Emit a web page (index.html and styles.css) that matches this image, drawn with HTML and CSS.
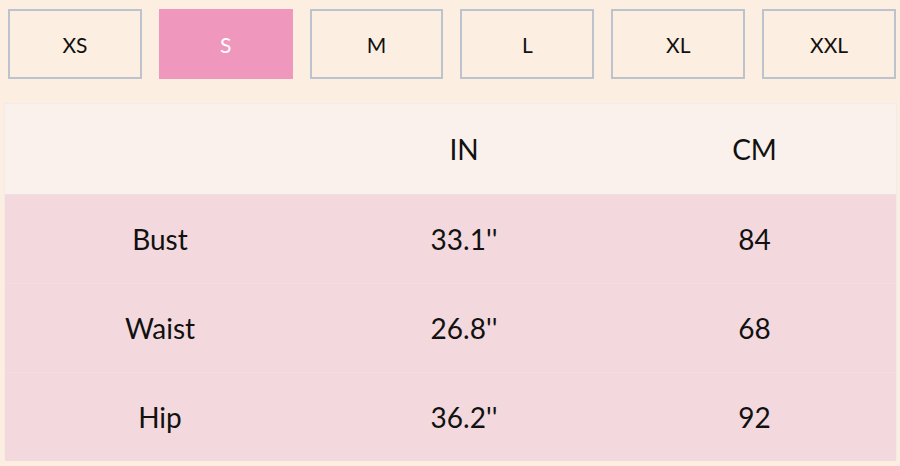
FILE: index.html
```html
<!DOCTYPE html>
<html>
<head>
<meta charset="utf-8">
<link rel="stylesheet" href="styles.css">
</head>
<body>
<div class="page">
  <div class="sizes">
    <div class="size">XS</div>
    <div class="size active">S</div>
    <div class="size">M</div>
    <div class="size">L</div>
    <div class="size">XL</div>
    <div class="size">XXL</div>
  </div>
  <div class="chart">
    <div class="row head">
      <div class="cell"></div>
      <div class="cell">IN</div>
      <div class="cell">CM</div>
    </div>
    <div class="row">
      <div class="cell">Bust</div>
      <div class="cell">33.1''</div>
      <div class="cell">84</div>
    </div>
    <div class="row">
      <div class="cell">Waist</div>
      <div class="cell">26.8''</div>
      <div class="cell">68</div>
    </div>
    <div class="row">
      <div class="cell">Hip</div>
      <div class="cell">36.2''</div>
      <div class="cell">92</div>
    </div>
  </div>
</div>
</body>
</html>
```
FILE: styles.css
```css
html, body {
  margin: 0;
  padding: 0;
  background: #fdeee2;
  font-family: "Lato", "Open Sans", sans-serif;
  color: #111;
}
.page {
  width: 900px;
  height: 466px;
  box-sizing: border-box;
  padding: 9px 3px 0 4px;
}
.sizes {
  display: flex;
  gap: 17px;
  margin: 0 1px 0 4px;
  height: 70px;
}
.size {
  flex: 1;
  box-sizing: border-box;
  border: 2px solid #bcc3cc;
  background: #fdeee2;
  display: flex;
  align-items: center;
  justify-content: center;
  font-size: 21px;
}
.size.active {
  background: #f097bd;
  border-color: #f097bd;
  color: #fff;
}
.chart {
  margin-top: 24px;
  border: 1px solid #f1ebeb;
  box-sizing: border-box;
  height: 357px;
}
.row {
  display: grid;
  grid-template-columns: 310px 298px 1fr;
  height: 88px;
  background: #f3d9dd;
  border-top: 1px solid #f0dee0;
}
.row.head {
  height: 90px;
  background: #fbf1ec;
  border-top: none;
}
.cell {
  display: flex;
  align-items: center;
  justify-content: center;
  font-size: 28px;
}
```
